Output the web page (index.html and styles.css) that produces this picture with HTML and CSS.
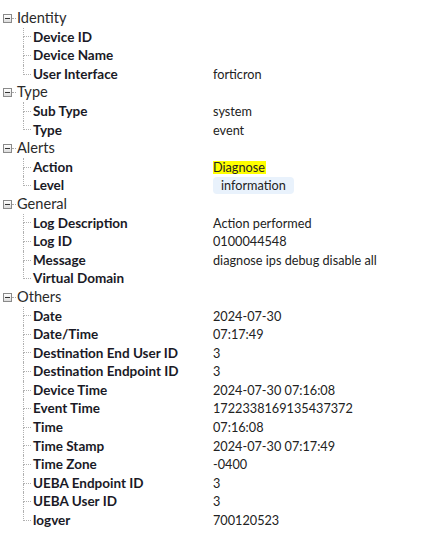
FILE: index.html
```html
<!DOCTYPE html>
<html>
<head>
<meta charset="utf-8">
<link rel="stylesheet" href="styles.css">
</head>
<body>
<div class="tree">
  <div class="section">
    <div class="head"><span class="toggle"></span><span class="hdots"></span><span class="htext">Identity</span></div>
    <div class="children">
      <div class="row"><span class="branch"><i class="top"></i><i class="bot"></i></span><span class="label">Device ID</span><span class="value"></span></div>
      <div class="row"><span class="branch"><i class="top"></i><i class="bot"></i></span><span class="label">Device Name</span><span class="value"></span></div>
      <div class="row last"><span class="branch"><i class="top"></i><i class="bot"></i></span><span class="label">User Interface</span><span class="value">forticron</span></div>
    </div>
  </div>
  <div class="section">
    <div class="head"><span class="toggle"></span><span class="hdots"></span><span class="htext">Type</span></div>
    <div class="children">
      <div class="row"><span class="branch"><i class="top"></i><i class="bot"></i></span><span class="label">Sub Type</span><span class="value">system</span></div>
      <div class="row last"><span class="branch"><i class="top"></i><i class="bot"></i></span><span class="label">Type</span><span class="value">event</span></div>
    </div>
  </div>
  <div class="section">
    <div class="head"><span class="toggle"></span><span class="hdots"></span><span class="htext">Alerts</span></div>
    <div class="children">
      <div class="row"><span class="branch"><i class="top"></i><i class="bot"></i></span><span class="label">Action</span><span class="value"><span class="hl">Diagnose</span></span></div>
      <div class="row last"><span class="branch"><i class="top"></i><i class="bot"></i></span><span class="label">Level</span><span class="value"><span class="badge">information</span></span></div>
    </div>
  </div>
  <div class="section">
    <div class="head"><span class="toggle"></span><span class="hdots"></span><span class="htext">General</span></div>
    <div class="children">
      <div class="row"><span class="branch"><i class="top"></i><i class="bot"></i></span><span class="label">Log Description</span><span class="value">Action performed</span></div>
      <div class="row"><span class="branch"><i class="top"></i><i class="bot"></i></span><span class="label">Log ID</span><span class="value">0100044548</span></div>
      <div class="row"><span class="branch"><i class="top"></i><i class="bot"></i></span><span class="label">Message</span><span class="value">diagnose ips debug disable all</span></div>
      <div class="row last"><span class="branch"><i class="top"></i><i class="bot"></i></span><span class="label">Virtual Domain</span><span class="value"></span></div>
    </div>
  </div>
  <div class="section">
    <div class="head"><span class="toggle"></span><span class="hdots"></span><span class="htext">Others</span></div>
    <div class="children">
      <div class="row"><span class="branch"><i class="top"></i><i class="bot"></i></span><span class="label">Date</span><span class="value">2024-07-30</span></div>
      <div class="row"><span class="branch"><i class="top"></i><i class="bot"></i></span><span class="label">Date/Time</span><span class="value">07:17:49</span></div>
      <div class="row"><span class="branch"><i class="top"></i><i class="bot"></i></span><span class="label">Destination End User ID</span><span class="value">3</span></div>
      <div class="row"><span class="branch"><i class="top"></i><i class="bot"></i></span><span class="label">Destination Endpoint ID</span><span class="value">3</span></div>
      <div class="row"><span class="branch"><i class="top"></i><i class="bot"></i></span><span class="label">Device Time</span><span class="value">2024-07-30 07:16:08</span></div>
      <div class="row"><span class="branch"><i class="top"></i><i class="bot"></i></span><span class="label">Event Time</span><span class="value">1722338169135437372</span></div>
      <div class="row"><span class="branch"><i class="top"></i><i class="bot"></i></span><span class="label">Time</span><span class="value">07:16:08</span></div>
      <div class="row"><span class="branch"><i class="top"></i><i class="bot"></i></span><span class="label">Time Stamp</span><span class="value">2024-07-30 07:17:49</span></div>
      <div class="row"><span class="branch"><i class="top"></i><i class="bot"></i></span><span class="label">Time Zone</span><span class="value">-0400</span></div>
      <div class="row"><span class="branch"><i class="top"></i><i class="bot"></i></span><span class="label">UEBA Endpoint ID</span><span class="value">3</span></div>
      <div class="row"><span class="branch"><i class="top"></i><i class="bot"></i></span><span class="label">UEBA User ID</span><span class="value">3</span></div>
      <div class="row last"><span class="branch"><i class="top"></i><i class="bot"></i></span><span class="label">logver</span><span class="value">700120523</span></div>
    </div>
  </div>
</div>
</body>
</html>
```
FILE: styles.css
```css
html, body {
  margin: 0;
  background: #fff;
}
body {
  font-family: Lato, "Open Sans", sans-serif;
  color: #222;
  padding: 9px 0 0 3px;
}
.head {
  display: flex;
  align-items: center;
  height: 18.6px;
}
.toggle {
  width: 7px;
  height: 7px;
  border: 1px solid #8a8a8a;
  background: linear-gradient(#ffffff, #dcdcdc);
  display: flex;
  align-items: center;
  justify-content: center;
  flex: none;
}
.toggle::before {
  content: "";
  width: 5px;
  height: 1px;
  background: #333;
}
.hdots {
  width: 4px;
  border-top: 1px dotted #aaa;
  margin-right: 1px;
}
.htext {
  font-size: 14.6px;
  color: #2a2a2a;
  line-height: 18.6px;
}
.children {
  margin-left: 20px;
}
.row {
  display: flex;
  height: 18.6px;
  align-items: stretch;
}
.branch {
  width: 8px;
  display: flex;
  flex-direction: column;
  flex: none;
  margin-right: 2px;
}
.branch i {
  display: block;
  flex: 1;
}
.branch .top {
  border-left: 1px dotted #b0b0b0;
  border-bottom: 1px dotted #b0b0b0;
}
.branch .bot {
  border-left: 1px dotted #b0b0b0;
}
.row.last .branch .bot {
  border-left-color: transparent;
}
.label {
  width: 180px;
  flex: none;
  font-weight: bold;
  font-size: 13.5px;
  line-height: 18.6px;
  color: #1a1a26;
}
.value {
  font-size: 12.7px;
  line-height: 18.6px;
  color: #222;
  display: flex;
  align-items: center;
}
.hl {
  background: #ffff00;
  line-height: 13px;
  padding: 0 1px 0 0;
}
.badge {
  background: #e9f2fc;
  border-radius: 4px;
  padding: 0 8px;
  line-height: 17px;
}
```
